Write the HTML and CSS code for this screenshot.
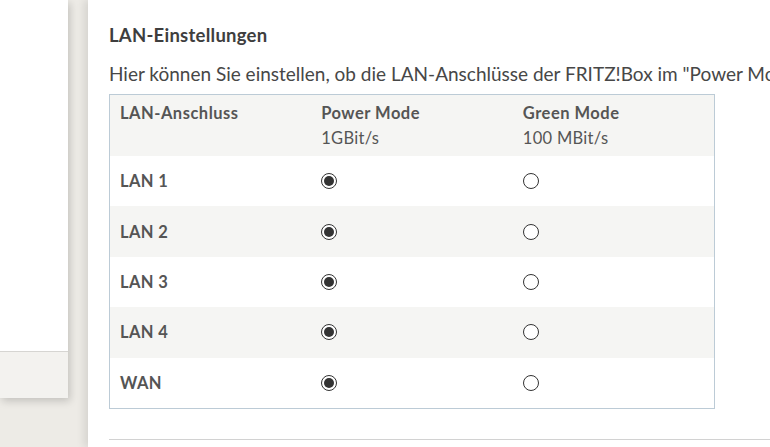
FILE: index.html
```html
<!DOCTYPE html>
<html lang="de">
<head>
<meta charset="utf-8">
<title>LAN-Einstellungen</title>
<link rel="stylesheet" href="styles.css">
</head>
<body>
<div class="page">
  <aside class="sidebar">
    <div class="sidebar-body"></div>
    <div class="sidebar-foot"></div>
  </aside>
  <main class="main">
    <h2 class="title">LAN-Einstellungen</h2>
    <p class="intro">Hier können Sie einstellen, ob die LAN-Anschlüsse der FRITZ!Box im "Power Mode" (1 GBit/s) oder im "Green Mode" (100 MBit/s) betrieben werden.</p>
    <table class="lan">
      <thead>
        <tr>
          <th>LAN-Anschluss</th>
          <th>Power Mode<span class="sub">1GBit/s</span></th>
          <th>Green Mode<span class="sub">100 MBit/s</span></th>
        </tr>
      </thead>
      <tbody>
        <tr><td class="name">LAN 1</td><td><span class="radio on"></span></td><td><span class="radio"></span></td></tr>
        <tr><td class="name">LAN 2</td><td><span class="radio on"></span></td><td><span class="radio"></span></td></tr>
        <tr><td class="name">LAN 3</td><td><span class="radio on"></span></td><td><span class="radio"></span></td></tr>
        <tr><td class="name">LAN 4</td><td><span class="radio on"></span></td><td><span class="radio"></span></td></tr>
        <tr><td class="name">WAN</td><td><span class="radio on"></span></td><td><span class="radio"></span></td></tr>
      </tbody>
    </table>
    <hr class="sep">
  </main>
</div>
</body>
</html>
```
FILE: styles.css
```css
html, body {
  margin: 0;
  padding: 0;
  height: 100%;
  overflow: hidden;
}
body {
  background: #edebe6;
  font-family: Lato, "Liberation Sans", sans-serif;
  color: #4a4a4a;
}
.page {
  display: flex;
  height: 447px;
}
.sidebar {
  width: 68px;
  flex: none;
  margin-right: 20px;
  display: flex;
  flex-direction: column;
  align-self: flex-start;
  box-shadow: 2px 3px 8px rgba(0,0,0,0.18);
}
.sidebar-body {
  height: 351px;
  background: #fff;
}
.sidebar-foot {
  height: 46px;
  background: #f3f2ef;
  border-top: 1px solid #d6d5d2;
}
.main {
  flex: 1;
  background: #fff;
  padding: 23px 0 0 21px;
  box-shadow: -4px 0 8px rgba(0,0,0,0.10);
  white-space: nowrap;
  overflow: hidden;
}
.title {
  margin: 0;
  font-size: 18.5px;
  font-weight: 700;
  line-height: 24px;
  letter-spacing: 0.25px;
  color: #3e3e3e;
}
.intro {
  margin: 15px 0 0;
  font-size: 19px;
  line-height: 24px;
  color: #474747;
}
.lan {
  margin-top: 8px;
  width: 606px;
  border-collapse: collapse;
  border: 1px solid #bccbd6;
  font-size: 16.5px;
  color: #555;
}
.lan th, .lan td {
  width: 33.33%;
  text-align: left;
  vertical-align: top;
  padding: 0 10px;
}
.lan thead tr {
  background: #f5f5f3;
}
.lan th {
  font-weight: 700;
  line-height: 25px;
  letter-spacing: 0.5px;
  padding-top: 6px;
  padding-bottom: 5px;
}
.sub {
  display: block;
  font-weight: 400;
  letter-spacing: 0.3px;
}
.lan td {
  height: 50.4px;
  vertical-align: middle;
  padding-top: 0;
  padding-bottom: 0;
}
.lan tbody tr:nth-child(even) {
  background: #f5f5f3;
}
.name {
  font-weight: 700;
  letter-spacing: 0.4px;
}
.radio {
  display: block;
  width: 14px;
  height: 14px;
  border: 1px solid #333;
  border-radius: 50%;
  background: #fff;
  box-sizing: content-box;
  position: relative;
}
.radio.on::after {
  content: "";
  position: absolute;
  left: 2px;
  top: 2px;
  width: 10px;
  height: 10px;
  border-radius: 50%;
  background: #333;
}
.sep {
  margin: 30px 0 0;
  border: 0;
  border-top: 1px solid #d2d2d2;
}
```
